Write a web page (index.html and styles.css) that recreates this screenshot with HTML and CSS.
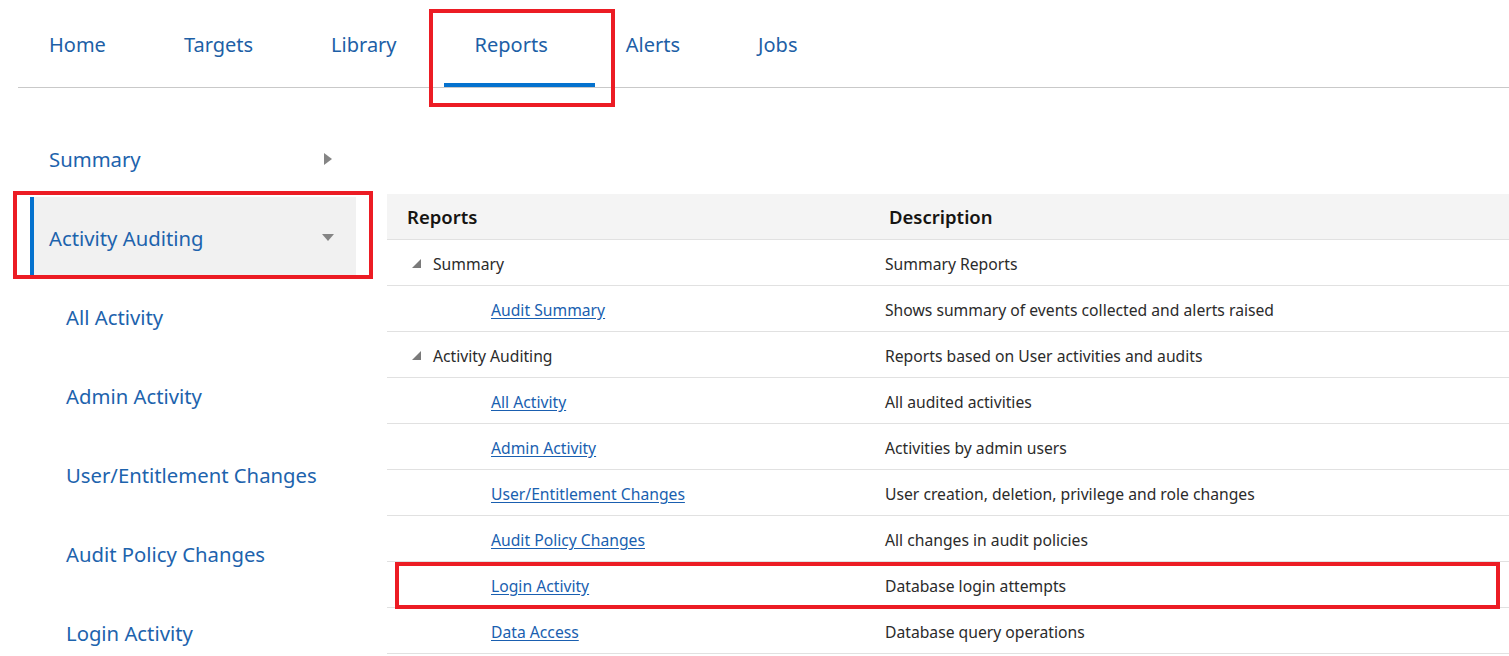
FILE: index.html
```html
<!DOCTYPE html>
<html lang="en">
<head>
<meta charset="utf-8">
<title>Reports</title>
<link rel="stylesheet" href="styles.css">
</head>
<body>
<nav class="topnav">
  <a class="tab">Home</a>
  <a class="tab">Targets</a>
  <a class="tab">Library</a>
  <a class="tab active">Reports<span class="mark mark-tab"></span></a>
  <a class="tab">Alerts</a>
  <a class="tab">Jobs</a>
</nav>
<div class="main">
  <aside class="sidebar">
    <div class="side-row">
      <span class="side-label">Summary</span>
      <svg class="caret-right" width="8" height="12" viewBox="0 0 8 12"><polygon points="0,0 8,6 0,12" fill="#858585"/></svg>
    </div>
    <div class="side-row selected">
      <span class="side-label">Activity Auditing</span>
      <svg class="caret-down" width="12" height="8" viewBox="0 0 12 8"><polygon points="0,0 12,0 6,7" fill="#858585"/></svg>
      <span class="mark mark-side"></span>
    </div>
    <div class="side-row sub"><span class="side-label">All Activity</span></div>
    <div class="side-row sub"><span class="side-label">Admin Activity</span></div>
    <div class="side-row sub"><span class="side-label">User/Entitlement Changes</span></div>
    <div class="side-row sub"><span class="side-label">Audit Policy Changes</span></div>
    <div class="side-row sub"><span class="side-label">Login Activity</span></div>
  </aside>
  <section class="content">
    <div class="table">
      <div class="tr head">
        <div class="th c1">Reports</div>
        <div class="th c2">Description</div>
      </div>
      <div class="tr">
        <div class="td c1 group"><svg class="tree" width="9" height="9" viewBox="0 0 9 9"><polygon points="9,0 9,9 0,9" fill="#7a7a7a"/></svg>Summary</div>
        <div class="td c2">Summary Reports</div>
      </div>
      <div class="tr">
        <div class="td c1 leaf"><a class="link">Audit Summary</a></div>
        <div class="td c2">Shows summary of events collected and alerts raised</div>
      </div>
      <div class="tr">
        <div class="td c1 group"><svg class="tree" width="9" height="9" viewBox="0 0 9 9"><polygon points="9,0 9,9 0,9" fill="#7a7a7a"/></svg>Activity Auditing</div>
        <div class="td c2">Reports based on User activities and audits</div>
      </div>
      <div class="tr">
        <div class="td c1 leaf"><a class="link">All Activity</a></div>
        <div class="td c2">All audited activities</div>
      </div>
      <div class="tr">
        <div class="td c1 leaf"><a class="link">Admin Activity</a></div>
        <div class="td c2">Activities by admin users</div>
      </div>
      <div class="tr">
        <div class="td c1 leaf"><a class="link">User/Entitlement Changes</a></div>
        <div class="td c2">User creation, deletion, privilege and role changes</div>
      </div>
      <div class="tr">
        <div class="td c1 leaf"><a class="link">Audit Policy Changes</a></div>
        <div class="td c2">All changes in audit policies</div>
      </div>
      <div class="tr marked">
        <div class="td c1 leaf"><a class="link">Login Activity</a></div>
        <div class="td c2">Database login attempts</div>
        <span class="mark mark-row"></span>
      </div>
      <div class="tr">
        <div class="td c1 leaf"><a class="link">Data Access</a></div>
        <div class="td c2">Database query operations</div>
      </div>
    </div>
  </section>
</div>
</body>
</html>
```
FILE: styles.css
```css
* { box-sizing: border-box; }
html, body { margin: 0; padding: 0; background: #ffffff; }
body {
  font-family: "Noto Sans", "Open Sans", sans-serif;
  color: #2b2b2b;
  overflow: hidden;
}

.topnav {
  display: flex;
  margin-left: 18px;
  height: 88px;
  border-bottom: 1px solid #c9c9c9;
}
.tab {
  position: relative;
  display: block;
  padding: 29px 47px 0 31px;
  height: 87px;
  font-size: 20px;
  line-height: 32px;
  color: #1d5fa6;
  border-bottom: 4px solid transparent;
}
.tab.active { border-bottom-color: #0572ce; }

.mark {
  position: absolute;
  border: 4px solid #ec1c24;
  pointer-events: none;
}
.mark-tab { left: -15px; right: -20px; top: 9px; bottom: -24px; }
.mark-side { left: -21px; right: -17px; top: -6px; bottom: -3px; }
.mark-row { left: 8px; right: 9px; top: 0; bottom: -2px; }

.main {
  display: flex;
  align-items: flex-start;
}
.sidebar {
  width: 326px;
  margin: 30px 0 0 30px;
  flex: none;
}
.side-row {
  position: relative;
  display: flex;
  align-items: center;
  justify-content: space-between;
  height: 79px;
  padding: 2px 24px 0 15px;
  border-left: 4px solid transparent;
  font-size: 20.3px;
  color: #1d63ad;
}
.side-row.selected {
  background: #f1f1f1;
  border-left-color: #0572ce;
}
.side-row.sub { padding-left: 32px; }
.caret-down { margin-right: -2px; }

.content {
  flex: 1;
  margin: 106px 0 0 31px;
  min-width: 0;
}
.table { width: 1122px; }
.tr {
  position: relative;
  display: grid;
  grid-template-columns: 482px 1fr;
  height: 46px;
  border-bottom: 1px solid #e1e1e1;
  align-items: center;
}
.tr.head { background: #f4f4f4; }
.th {
  font-weight: 600;
  font-size: 18.5px;
  color: #161513;
  padding-left: 20px;
}
.td {
  font-size: 15.7px;
  color: #2b2b2b;
  padding: 2px 0 0 16px;
}
.td.group {
  display: flex;
  align-items: center;
  padding-left: 25px;
}
.tree { margin-right: 12px; }
.td.leaf { padding-left: 104px; }
.link {
  color: #1a5fb0;
  text-decoration: underline;
  text-underline-offset: 2px;
}
```
